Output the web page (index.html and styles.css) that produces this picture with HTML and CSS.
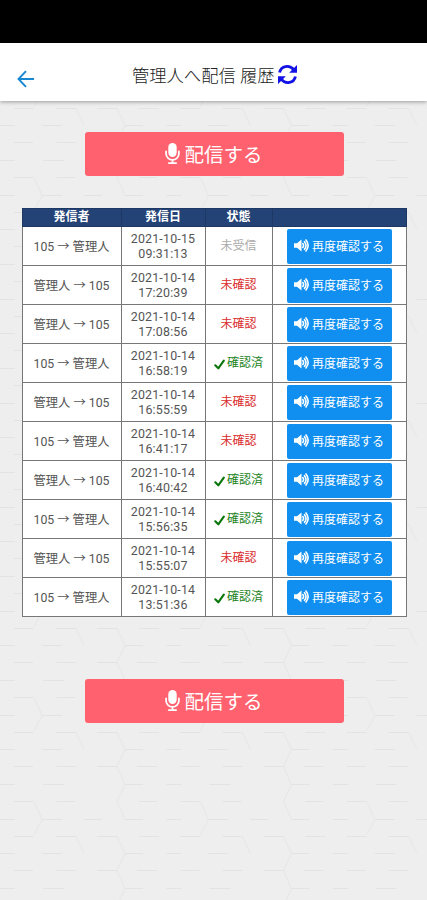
FILE: index.html
```html
<!DOCTYPE html>
<html lang="ja">

<head>
    <meta charset="UTF-8">
    <meta name="viewport" content="width=device-width, initial-scale=1.0">
    <title>管理人へ配信 履歴</title>
    <link rel="stylesheet" href="styles.css">
</head>

<body>

    <!-- shared icons -->
    <svg class="sprite" width="0" height="0">
        <symbol id="icon-mic" viewBox="0 0 14 20">
            <rect x="3" y="0" width="8" height="13.4" rx="4" fill="currentColor" />
            <path d="M.9 8v2.3a6.100 5.700 0 0 0 12.200 0V8M7 16v3M3.500 19.100h7" fill="none" stroke="currentColor" stroke-width="1.7" stroke-linecap="round" />
        </symbol>
        <symbol id="icon-volume" viewBox="0 0 15 13">
            <path d="M0 4.200h3L7.500.4v12.200L3 8.800H0z" fill="currentColor" />
            <path d="M8.800 4.600q1.600 1.900 0 3.800M10.500 2.700q3.100 3.800 0 7.600M12 1q4.300 5.500 0 11" fill="none" stroke="currentColor" stroke-width="1.600" stroke-linecap="round" />
        </symbol>
        <symbol id="icon-check" viewBox="0 0 11 11">
            <path d="M1.300 6.300l3 3L9.800 1.700" fill="none" stroke="currentColor" stroke-width="2.100" stroke-linecap="round" stroke-linejoin="round" />
        </symbol>
    </svg>

    <svg class="texture" aria-hidden="true">
        <defs>
            <pattern id="hex" x="0" y="107" width="166.4" height="104" patternUnits="userSpaceOnUse">
                <g id="hex-lines" fill="none">
                    <path d="M14 1.500h20M56 1.500h20M97 1.500h20M139 1.500h20M0 18.500h15M42 18.500h20M125 18.500h18M14 35.500h19M56 35.500h20M97 35.500h20M137 35.500h20M0 53.500h15M43 53.500h21M125 53.500h18M14 70.500h19M56 70.500h19M139 70.500h18M0 88.500h15M42 88.500h20M84 88.500h18M125 88.500h18" />
                    <path d="M117 1.500l8 17-8 17 8 18M125 53.500l-8 17 8 18M34 70.500l8 18-8 15M76 1.500l8 17" opacity=".8" />
                </g>
            </pattern>
        </defs>
        <rect width="100%" height="100%" fill="url(#hex)" />
    </svg>

    <div class="status-bar"></div>

    <header>
        <a class="back" href="#" aria-label="戻る">
            <svg width="18" height="18" viewBox="0 0 18 18">
                <path d="M17 9H2M9 1.200L1.500 9 9 16.800" />
            </svg>
        </a>
        <h1>管理人へ配信 履歴</h1>
        <svg class="refresh" width="19" height="19" viewBox="0 0 19 19">
            <path d="M1.600 7.600C3 .6 11.500-.4 15.600 4.600M17.400 11.400C16 18.400 7.500 19.400 3.400 14.400" />
            <path class="head" d="M19 0v7.800h-7.800zM0 19v-7.800h7.800z" />
        </svg>
    </header>

    <div class="container">
        <button class="send-btn"><svg width="15" height="21"><use href="#icon-mic" /></svg>配信する</button>

        <table class="history-table">
            <colgroup>
                <col class="col-sender">
                <col class="col-date">
                <col class="col-status">
                <col>
            </colgroup>
            <thead>
                <tr>
                    <th>発信者</th>
                    <th>発信日</th>
                    <th>状態</th>
                    <th></th>
                </tr>
            </thead>
            <tbody>
                <!-- filled by script.js -->
            </tbody>
        </table>

        <button class="send-btn"><svg width="15" height="21"><use href="#icon-mic" /></svg>配信する</button>
    </div>

    <script src="script.js"></script>
</body>

</html>
```
FILE: styles.css
```css
body {
    font-family: Roboto, "Noto Sans CJK JP", sans-serif;
    background-color: #eee;
    margin: 0;
    min-height: 900px;
    color: #555;
}

.sprite,
.texture {
    position: absolute;
}

.texture {
    top: 0;
    left: 0;
    width: 100%;
    height: 900px;
    z-index: -1;
}

#hex-lines {
    stroke: #e3e3e3;
    stroke-width: 1;
}

.status-bar {
    height: 43px;
    background-color: #000;
}

header {
    display: flex;
    align-items: center;
    height: 58px;
    box-sizing: border-box;
    padding: 5px 0 0 17px;
    background-color: #fff;
    box-shadow: 0 1px 4px rgba(0, 0, 0, 0.35);
}

.back {
    display: flex;
    width: 115px;
    padding-top: 8px;
}

.back path {
    fill: none;
    stroke: #1787d4;
    stroke-width: 1.9;
}

header h1 {
    margin: 0;
    font-size: 17.3px;
    font-weight: 300;
    color: #222;
    white-space: nowrap;
}

.refresh {
    margin-left: 4px;
}

.refresh path {
    fill: none;
    stroke: #1212e6;
    stroke-width: 2.8;
}

.refresh .head {
    fill: #1212e6;
    stroke: none;
}

.container {
    display: flex;
    flex-direction: column;
    align-items: center;
    padding-top: 31px;
}

.send-btn {
    display: flex;
    align-items: center;
    justify-content: center;
    gap: 4px;
    width: 259px;
    height: 44px;
    margin-left: 1px;
    padding: 0 0 1px;
    border: none;
    border-radius: 3px;
    background-color: #ff616e;
    color: #fff;
    font-family: inherit;
    font-size: 19.5px;
}

.history-table {
    width: 385px;
    margin: 32px 0 62px 1px;
    border-collapse: collapse;
    table-layout: fixed;
    background-color: #fff;
    font-size: 12px;
    text-align: center;
}

.col-sender {
    width: 99px;
}

.col-date {
    width: 84px;
}

.col-status {
    width: 67px;
}

.history-table th {
    height: 17px;
    padding: 0;
    border: 1px solid #1d3963;
    background-color: #234276;
    color: #fff;
    line-height: 17px;
}

.history-table td {
    height: 38px;
    padding: 0;
    border: 1px solid #777;
    line-height: 15px;
}

.history-table .sender {
    padding-top: 2px;
    height: 36px;
    font-size: 12.3px;
}

.history-table .date {
    font-size: 12.4px;
    letter-spacing: 0.2px;
}

.unreceived {
    color: #aaa;
}

.unchecked {
    color: #d92b2b;
}

.checked {
    color: #218321;
}

.checked svg {
    margin-right: 2px;
    vertical-align: -3px;
    color: #087508;
}

.replay-btn {
    display: flex;
    align-items: center;
    justify-content: center;
    gap: 3px;
    width: 105px;
    height: 35px;
    margin: 0 auto;
    padding: 0 0 1px;
    border: none;
    border-radius: 2px;
    background-color: #108ff0;
    color: #fff;
    font-family: inherit;
    font-size: 12px;
}
```
FILE: script.js
```js
const OUT = '105 → 管理人';
const IN = '管理人 → 105';

const labels = {
    unreceived: '未受信',
    unchecked: '未確認',
    checked: '確認済'
};

const history = [
    [OUT, '2021-10-15', '09:31:13', 'unreceived'],
    [IN, '2021-10-14', '17:20:39', 'unchecked'],
    [IN, '2021-10-14', '17:08:56', 'unchecked'],
    [OUT, '2021-10-14', '16:58:19', 'checked'],
    [IN, '2021-10-14', '16:55:59', 'unchecked'],
    [OUT, '2021-10-14', '16:41:17', 'unchecked'],
    [IN, '2021-10-14', '16:40:42', 'checked'],
    [OUT, '2021-10-14', '15:56:35', 'checked'],
    [IN, '2021-10-14', '15:55:07', 'unchecked'],
    [OUT, '2021-10-14', '13:51:36', 'checked']
];

const tableBody = document.querySelector('tbody');

history.forEach(function ([sender, date, time, status]) {
    const row = document.createElement('tr');
    const check = status === 'checked' ? '<svg width="11" height="11"><use href="#icon-check" /></svg>' : '';

    row.innerHTML = `
        <td class="sender">${sender}</td>
        <td class="date">${date}<br>${time}</td>
        <td class="${status}">${check}${labels[status]}</td>
        <td><button class="replay-btn"><svg width="15" height="13"><use href="#icon-volume" /></svg>再度確認する</button></td>`;
    tableBody.appendChild(row);
});
```
